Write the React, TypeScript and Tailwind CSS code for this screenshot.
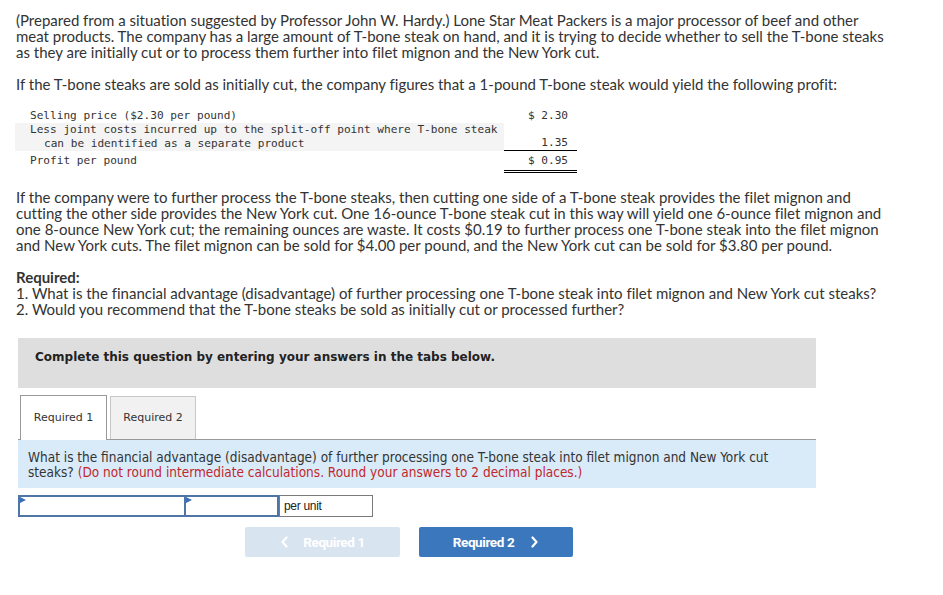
import React from "react";

function Chevron({ dir, className }: { dir: "left" | "right"; className?: string }) {
  return (
    <svg width="9" height="12" viewBox="0 0 9 12" className={className}>
      {dir === "left" ? (
        <path d="M6.5 1.5 L2.5 6 L6.5 10.5" fill="none" stroke="currentColor" strokeWidth="2.2" strokeLinecap="round" strokeLinejoin="round" />
      ) : (
        <path d="M2.5 1.5 L6.5 6 L2.5 10.5" fill="none" stroke="currentColor" strokeWidth="2.2" strokeLinecap="round" strokeLinejoin="round" />
      )}
    </svg>
  );
}

function Corner() {
  return (
    <svg width="6" height="6" viewBox="0 0 6 6" className="absolute left-0 top-0">
      <path d="M0 0 L6 3 L0 6 Z" fill="#3b6fb3" />
    </svg>
  );
}

export default function App() {
  return (
    <div className="w-[943px] h-[595px] bg-white overflow-hidden">
      <div className="pl-4 pt-3 text-[#333] font-['Lato',sans-serif] text-[15px] leading-4 [font-variant-ligatures:none]">
        <p className="whitespace-nowrap">
          (Prepared from a situation suggested by Professor John W. Hardy.) Lone Star Meat Packers is a major processor of beef and other
          <br />
          meat products. The company has a large amount of T-bone steak on hand, and it is trying to decide whether to sell the T-bone steaks
          <br />
          as they are initially cut or to process them further into filet mignon and the New York cut.
        </p>
        <p className="mt-4 whitespace-nowrap">
          If the T-bone steaks are sold as initially cut, the company figures that a 1-pound T-bone steak would yield the following profit:
        </p>

        <div className="mt-[17px] ml-[-1px] font-['DejaVu_Sans_Mono',monospace] text-[11.1px] leading-[14px] text-[#333]">
          <div className="flex">
            <div className="w-[489px] pl-[15px]">Selling price ($2.30 per pound)</div>
            <div className="w-[73px] text-right pr-[9px] whitespace-pre">$ 2.30</div>
          </div>
          <div className="flex">
            <div className="w-[489px] pl-[15px] bg-[#f4f4f4] whitespace-nowrap">
              Less joint costs incurred up to the split-off point where T-bone steak
              <br />
              <span className="pl-[14px]">can be identified as a separate product</span>
            </div>
            <div className="w-[73px] flex items-end justify-end pr-[9px] border-b border-black">1.35</div>
          </div>
          <div className="flex">
            <div className="w-[489px] pl-[15px] pt-[3px]">Profit per pound</div>
            <div className="w-[73px] text-right pr-[9px] pt-[3px] pb-[2px] border-b-[3px] border-double border-black whitespace-pre">$ 0.95</div>
          </div>
        </div>

        <p className="mt-4 whitespace-nowrap">
          If the company were to further process the T-bone steaks, then cutting one side of a T-bone steak provides the filet mignon and
          <br />
          cutting the other side provides the New York cut. One 16-ounce T-bone steak cut in this way will yield one 6-ounce filet mignon and
          <br />
          one 8-ounce New York cut; the remaining ounces are waste. It costs $0.19 to further process one T-bone steak into the filet mignon
          <br />
          and New York cuts. The filet mignon can be sold for $4.00 per pound, and the New York cut can be sold for $3.80 per pound.
        </p>

        <p className="mt-4 font-bold">Required:</p>
        <p className="whitespace-nowrap">
          1. What is the financial advantage (disadvantage) of further processing one T-bone steak into filet mignon and New York cut steaks?
          <br />
          2. Would you recommend that the T-bone steaks be sold as initially cut or processed further?
        </p>
      </div>

      <div className="ml-[18px] w-[798px]">
        <div className="mt-[21px] h-[50px] bg-[#dedede] pl-[17px] pt-[12px] font-['DejaVu_Sans',sans-serif] font-bold text-[12px] leading-[14px] text-[#222]">
          Complete this question by entering your answers in the tabs below.
        </div>

        <div className="mt-[7px] ml-[2px] flex items-end gap-[3px] font-['DejaVu_Sans',sans-serif] text-[11px] text-[#333]">
          <div className="relative z-10 mb-[-1px] h-[45px] w-[87px] flex items-center justify-center border border-b-0 border-[#999] bg-white">
            Required 1
          </div>
          <div className="h-[43px] w-[86px] flex items-center justify-center border border-b-0 border-[#c8c8c8] bg-[#f1f1f1]">
            Required 2
          </div>
        </div>

        <div className="h-[49px] border-t border-[#999] bg-[#d9ebf9] pl-[10px] pt-[10px] font-['DejaVu_Sans_Condensed','DejaVu_Sans',sans-serif] [font-stretch:condensed] text-[13.5px] leading-[15px] text-[#333] whitespace-nowrap">
          What is the financial advantage (disadvantage) of further processing one T-bone steak into filet mignon and New York cut
          <br />
          steaks? <span className="text-[#c1272d]">(Do not round intermediate calculations. Round your answers to 2 decimal places.)</span>
        </div>

        <div className="mt-[7px] flex h-[22px]">
          <div className="relative w-[168px] h-full border-2 border-[#4f74a6] bg-white">
            <Corner />
          </div>
          <div className="relative w-[93px] h-full border-2 border-[#4f74a6] border-l-0 bg-white">
            <Corner />
          </div>
          <div className="w-[94px] h-full border border-[#7a7a7a] flex items-center pl-[4px] font-['Liberation_Sans',sans-serif] text-[12px] text-[#222] tracking-[-0.3px]">
            per unit
          </div>
        </div>

        <div className="mt-[10px] ml-[227px] flex gap-[19px] font-['Roboto',sans-serif] font-bold text-[13.5px] tracking-[-0.4px] text-white">
          <div className="w-[155px] h-[30px] rounded-[2px] bg-[#d9e4f1] flex items-center justify-center gap-[14px]">
            <Chevron dir="left" />
            <span>Required 1</span>
          </div>
          <div className="w-[154px] h-[30px] rounded-[2px] bg-[#3a77bc] flex items-center justify-center gap-[16px]">
            <span>Required 2</span>
            <Chevron dir="right" />
          </div>
        </div>
      </div>
    </div>
  );
}
